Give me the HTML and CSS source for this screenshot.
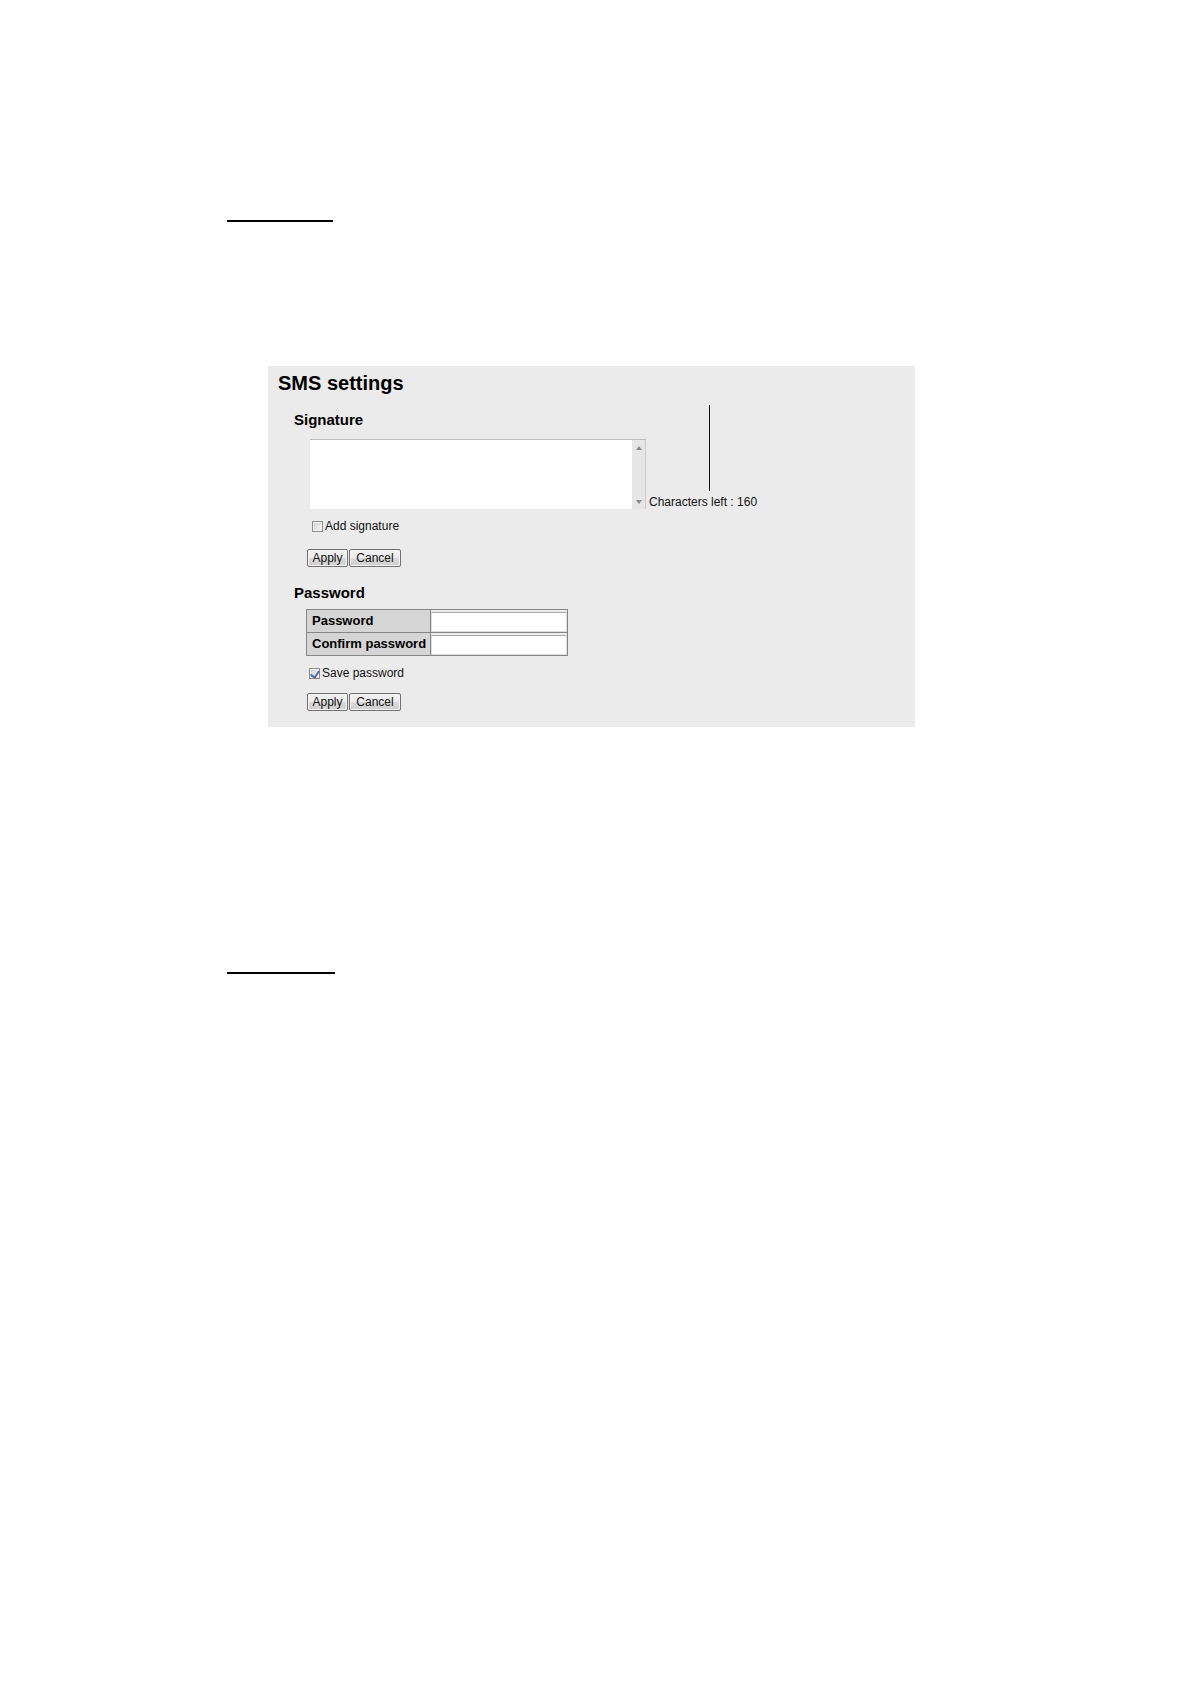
FILE: index.html
```
<!DOCTYPE html>
<html lang="en">
<head>
    <meta charset="UTF-8">
    <title>SMS settings</title>
    <meta name="viewport" content="width=device-width, initial-scale=1">
    <link rel="stylesheet" href="styles.css">
</head>
<body>
    <main class="page">
        <hr class="rule">

        <div class="panel">
            <h1>SMS settings</h1>

            <form class="signature-form">
                <h2 id="signature-title">Signature</h2>
                <div class="signature-row">
                    <div class="signature-box">
                        <textarea aria-labelledby="signature-title"></textarea>
                        <div class="scrollbar">
                            <svg width="6" height="4" viewBox="0 0 6 4"><path d="M3 0L6 4H0z"/></svg>
                            <svg width="6" height="4" viewBox="0 0 6 4"><path d="M0 0H6L3 4z"/></svg>
                        </div>
                    </div>
                    <div class="counter">Characters left : 160</div>
                </div>
                <div class="check add-check">
                    <input type="checkbox" id="add-signature">
                    <label for="add-signature">Add signature</label>
                </div>
                <div class="buttons">
                    <button type="button" class="apply">Apply</button>
                    <button type="button" class="cancel">Cancel</button>
                </div>
            </form>

            <form class="password-form">
                <h2>Password</h2>
                <table>
                    <tr>
                        <th><label for="password">Password</label></th>
                        <td><input type="password" id="password"></td>
                    </tr>
                    <tr>
                        <th><label for="confirm">Confirm password</label></th>
                        <td><input type="password" id="confirm"></td>
                    </tr>
                </table>
                <div class="check">
                    <input type="checkbox" id="save-password" checked>
                    <label for="save-password">Save password</label>
                </div>
                <div class="buttons">
                    <button type="button" class="apply">Apply</button>
                    <button type="button" class="cancel">Cancel</button>
                </div>
            </form>
        </div>

        <hr class="rule rule-bottom">
    </main>
</body>
</html>
```

FILE: styles.css
```
* {
    box-sizing: border-box;
}
body {
    margin: 0;
    background: #fff;
    color: #111;
    font-family: "Liberation Sans", Arial, sans-serif;
    font-size: 12px;
    line-height: 14px;
}
.page {
    padding: 220px 275px 0 227px;
}
.rule {
    width: 106px;
    height: 2px;
    margin: 0;
    border: 0;
    background: #000;
}
.rule-bottom {
    width: 108px;
}
.panel {
    margin: 144px 0 245px 41px;
    padding: 5px 10px 16px;
    background: #ebebeb;
}
h1 {
    margin: 0 0 16px;
    font-size: 20px;
    line-height: 24px;
    color: #000;
}
h2 {
    margin: 0;
    padding-left: 16px;
    font-size: 15px;
    line-height: 18px;
    color: #000;
}
.signature-form {
    margin-bottom: 17px;
}
.signature-row {
    display: flex;
    align-items: flex-end;
    gap: 3px;
    margin: 10px 0 10px 32px;
}
.signature-box {
    display: flex;
    width: 336px;
    height: 70px;
    border-top: 1px solid #bbb;
    border-right: 1px solid #ccc;
    background: #fff;
}
textarea {
    flex: 1;
    min-width: 0;
    padding: 2px;
    border: 0;
    background: #fff;
    font: inherit;
    resize: none;
    overflow: hidden;
}
.scrollbar {
    display: flex;
    flex-direction: column;
    justify-content: space-between;
    align-items: center;
    width: 13px;
    padding: 6px 0 5px;
    background: #e6e6e6;
}
.scrollbar svg {
    display: block;
    fill: #888;
}
.counter {
    position: relative;
}
/* leader line above the counter */
.counter::before {
    content: "";
    position: absolute;
    left: 60px;
    bottom: 18px;
    width: 1px;
    height: 86px;
    background: #111;
}
.check {
    display: flex;
    align-items: center;
    gap: 2px;
    margin: 10px 0 13px 31px;
}
.add-check {
    margin: 0 0 16px 34px;
}
.check input {
    display: flex;
    justify-content: center;
    appearance: none;
    width: 11px;
    height: 11px;
    margin: 0;
    border: 1px solid #8e8f8f;
    background: linear-gradient(135deg, #cfd2d6, #f6f6f6);
    box-shadow: inset 0 0 0 1px #f4f4f4;
}
.check input:checked::after {
    content: "";
    width: 4px;
    height: 7px;
    border: solid #5a68ae;
    border-width: 0 2px 2px 0;
    transform: rotate(35deg);
}
.buttons {
    display: flex;
    gap: 1px;
    padding-left: 29px;
}
button {
    height: 18px;
    padding: 0;
    border: 1px solid #707070;
    border-radius: 2px;
    background: linear-gradient(#f2f2f2 0%, #ebebeb 50%, #dadada 50%, #cfcfcf 100%);
    box-shadow: inset 0 0 0 1px #f6f6f6;
    color: #111;
    font: inherit;
}
.apply {
    width: 41px;
}
.cancel {
    width: 52px;
}
table {
    margin: 7px 0 0 28px;
    border-collapse: collapse;
}
th,
td {
    height: 23px;
    border: 1px solid #858585;
}
th {
    padding: 0 4px 0 5px;
    background: #d5d5d5;
    color: #000;
    font-size: 13px;
    text-align: left;
    white-space: nowrap;
}
td {
    padding: 1px 0 0;
}
td input {
    display: block;
    width: 136px;
    height: 20px;
    padding: 1px 2px;
    border: 1px solid #ddd;
    border-top-color: #aaa;
    background: #fff;
    font: inherit;
}
```
